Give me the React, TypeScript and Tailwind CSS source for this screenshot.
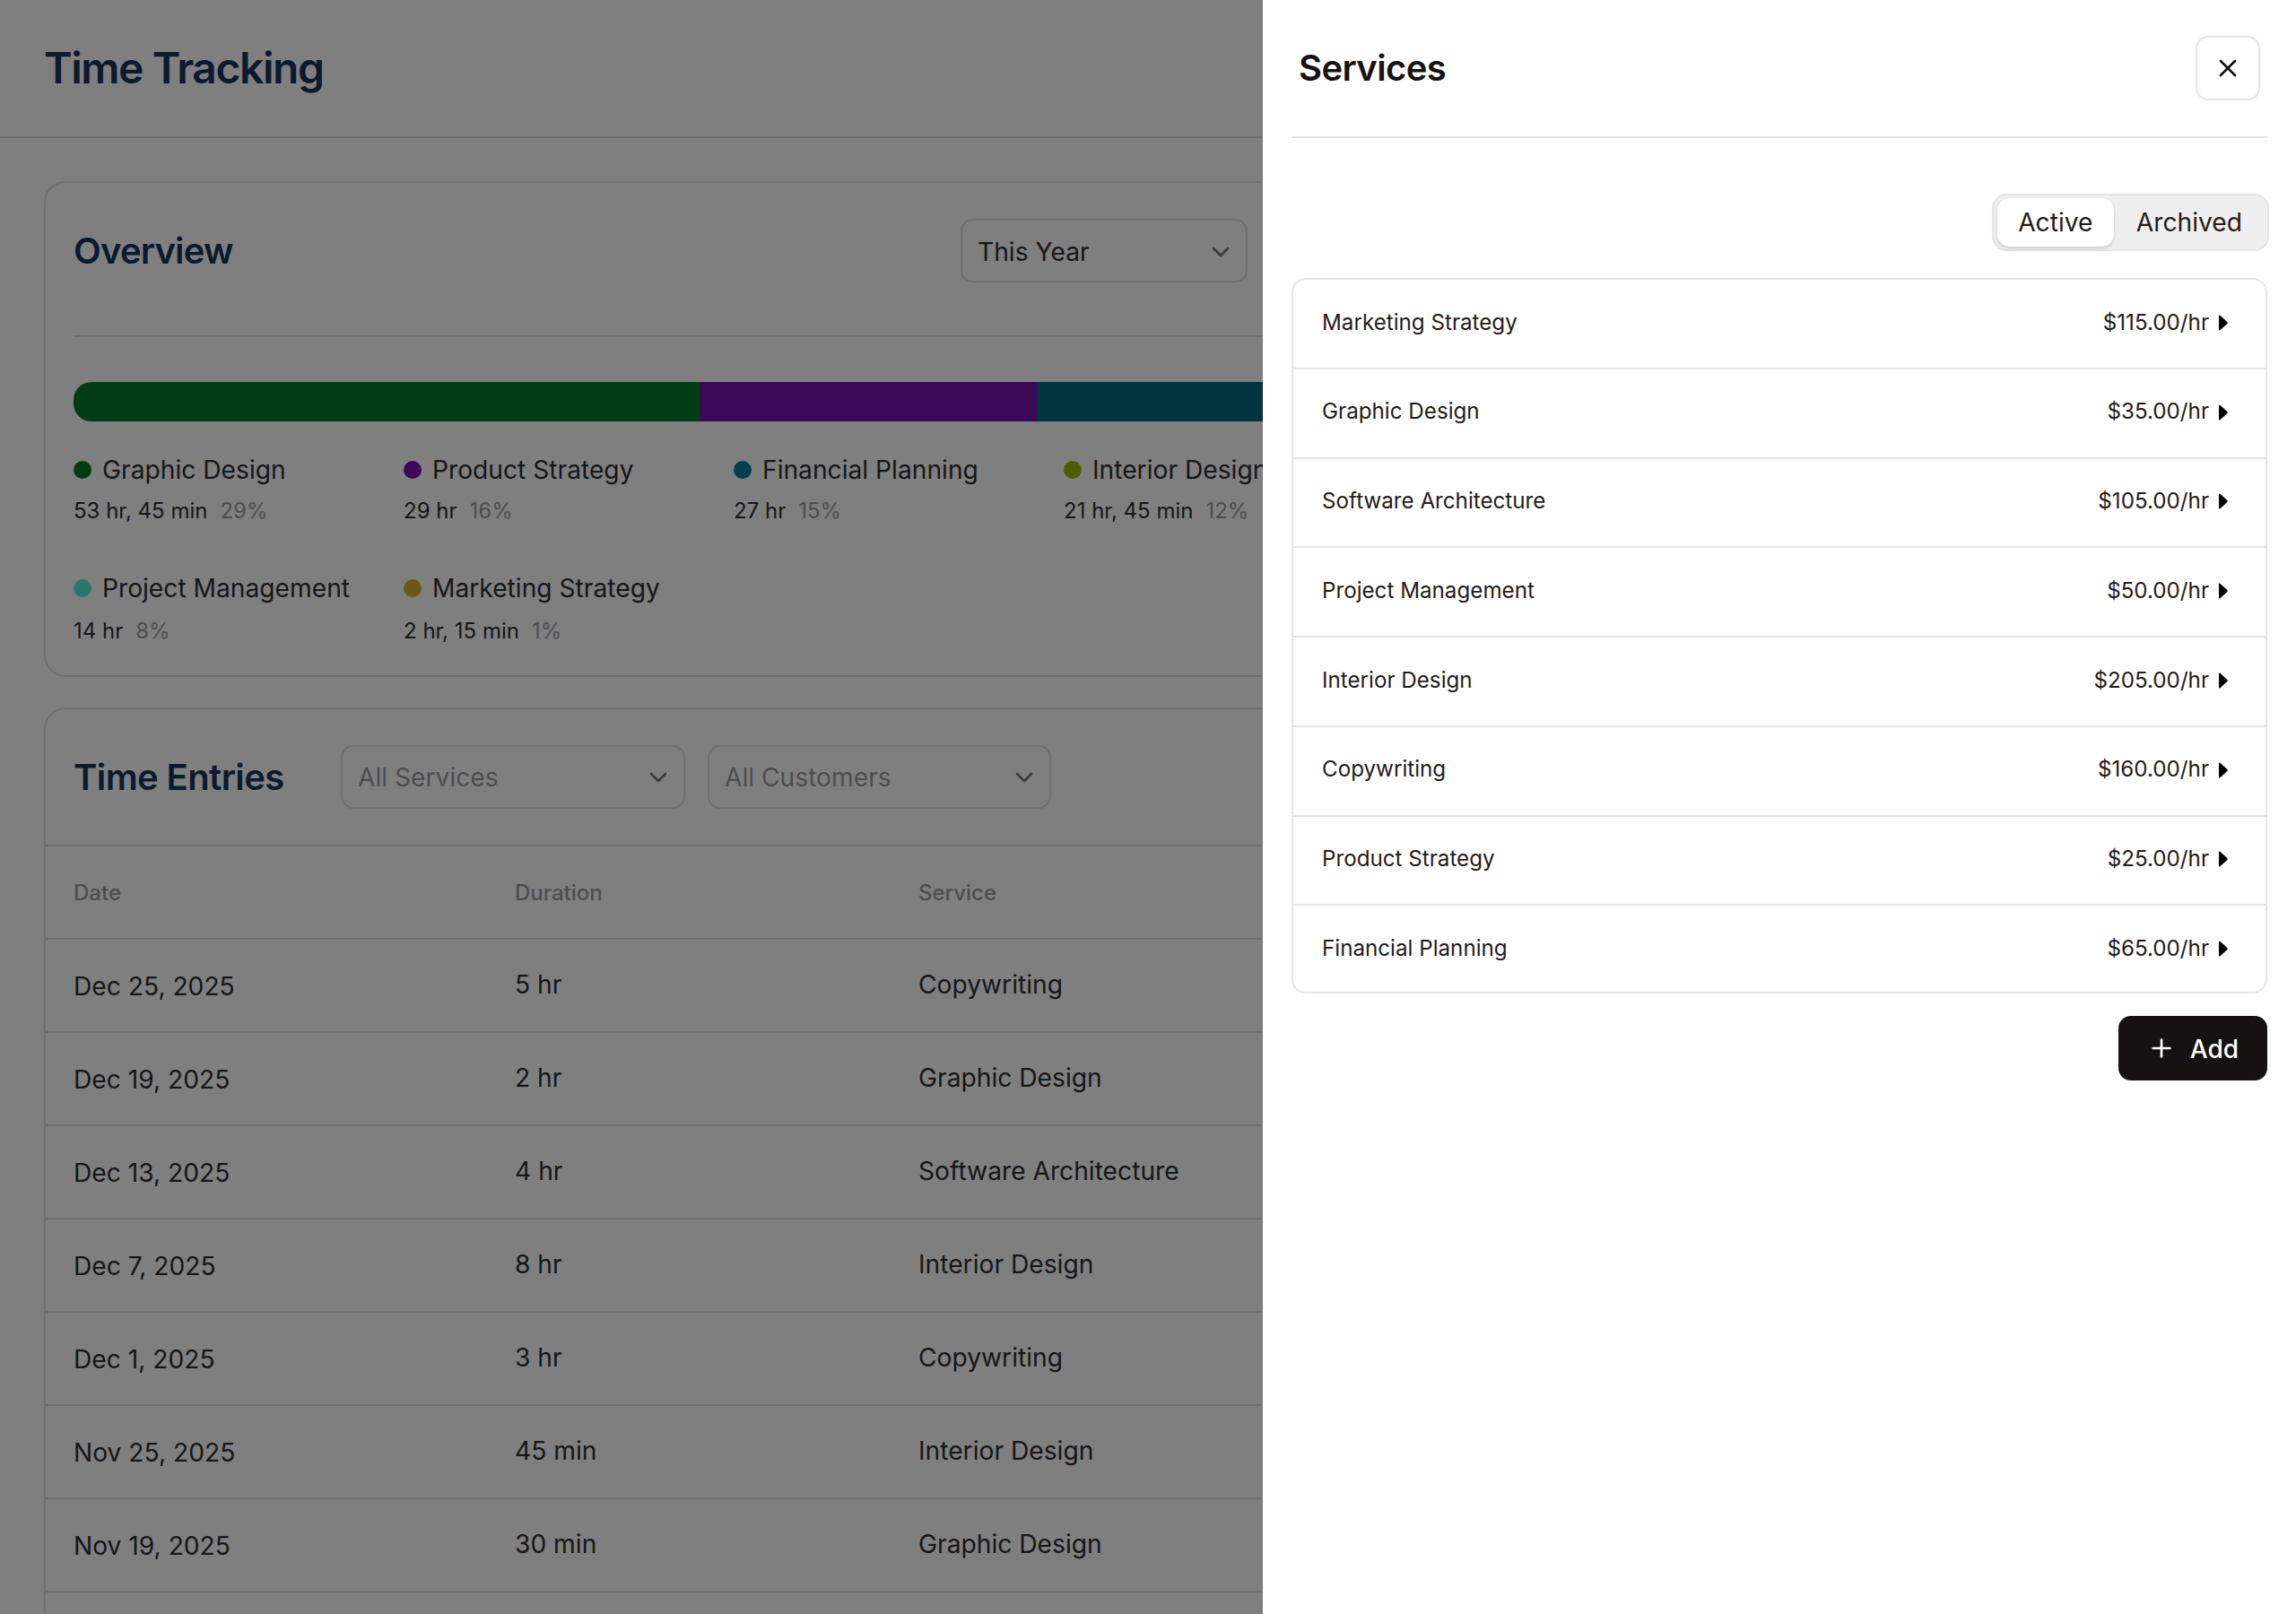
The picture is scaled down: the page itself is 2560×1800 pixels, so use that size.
import React from 'react';
import { ChevronDown, Plus, X } from 'lucide-react';

const legendItems = [
  { name: 'Graphic Design', time: '53 hr, 45 min', pct: '29%', dot: 'bg-[#007a28]' },
  { name: 'Product Strategy', time: '29 hr', pct: '16%', dot: 'bg-[#7414b0]' },
  { name: 'Financial Planning', time: '27 hr', pct: '15%', dot: 'bg-[#008099]' },
  { name: 'Interior Design', time: '21 hr, 45 min', pct: '12%', dot: 'bg-[#9abc00]' },
  { name: 'Project Management', time: '14 hr', pct: '8%', dot: 'bg-[#50f0d4]' },
  { name: 'Marketing Strategy', time: '2 hr, 15 min', pct: '1%', dot: 'bg-[#d6b02c]' },
];

const entries = [
  { date: 'Dec 25, 2025', duration: '5 hr', service: 'Copywriting' },
  { date: 'Dec 19, 2025', duration: '2 hr', service: 'Graphic Design' },
  { date: 'Dec 13, 2025', duration: '4 hr', service: 'Software Architecture' },
  { date: 'Dec 7, 2025', duration: '8 hr', service: 'Interior Design' },
  { date: 'Dec 1, 2025', duration: '3 hr', service: 'Copywriting' },
  { date: 'Nov 25, 2025', duration: '45 min', service: 'Interior Design' },
  { date: 'Nov 19, 2025', duration: '30 min', service: 'Graphic Design' },
];

const services = [
  { name: 'Marketing Strategy', rate: '$115.00/hr' },
  { name: 'Graphic Design', rate: '$35.00/hr' },
  { name: 'Software Architecture', rate: '$105.00/hr' },
  { name: 'Project Management', rate: '$50.00/hr' },
  { name: 'Interior Design', rate: '$205.00/hr' },
  { name: 'Copywriting', rate: '$160.00/hr' },
  { name: 'Product Strategy', rate: '$25.00/hr' },
  { name: 'Financial Planning', rate: '$65.00/hr' },
];

const Select: React.FC<{ label: string; className: string; muted?: boolean }> = ({ label, className, muted }) => (
  <div className={`flex h-[71px] items-center justify-between rounded-[14px] border-2 border-[#dfdfdf] pl-[17px] pr-[12px] text-[28.2px] ${muted ? 'text-[#9a9aa0]' : 'pt-[2px] text-[#2e2e32]'} ${className}`}>
    <span className="pt-[2px]">{label}</span>
    <ChevronDown className="h-[32px] w-[32px] text-[#77777c]" strokeWidth={2} />
  </div>
);

const Caret = () => (
  <svg viewBox="0 0 10 18" className="h-[18px] w-[10px]" fill="#000">
    <path d="M1 0.6 L9.4 8 Q10 9 9.4 10 L1 17.4 Q0 18 0 16.6 V1.4 Q0 0 1 0.6 Z" />
  </svg>
);

export default function App() {
  return (
    <div className="relative h-[1800px] w-[2560px] overflow-hidden bg-white font-['Inter',sans-serif]">
      <header className="flex h-[154px] items-center border-b-2 border-[#dfdfdf] px-[49px]">
        <h1 className="text-[48px] font-semibold tracking-[-1.45px] text-[#18345c]">Time Tracking</h1>
      </header>

      <main className="w-[1600px] px-[49px] pt-[48px]">
        {/* Overview */}
        <section className="h-[553px] rounded-[24px] border-2 border-[#dfdfdf] px-[31px] pt-[40px]">
          <div className="flex items-center justify-between border-b-2 border-[#dfdfdf] pb-[59px]">
            <h2 className="text-[40px] font-semibold tracking-[-0.8px] text-[#18345c]">Overview</h2>
            <Select label="This Year" className="mr-[127px] w-[320px]" />
          </div>
          <div className="mt-[50px] flex h-[44px] overflow-hidden rounded-l-[20px]">
            <div className="w-[698px] bg-[#007a28]" />
            <div className="w-[376px] bg-[#7414b0]" />
            <div className="flex-1 bg-[#006880]" />
          </div>
          <div className="mt-[34px] grid grid-cols-[repeat(4,368px)] gap-y-[48px]">
            {legendItems.map((item, i) => (
              <div key={item.name} className="whitespace-nowrap">
                <div className="flex h-[40px] items-center gap-[12px] text-[28.2px] text-[#2e2e32]">
                  <span className={`h-[20px] w-[20px] rounded-full ${item.dot}`} />
                  {item.name}
                </div>
                <div className={`flex h-[36px] items-center gap-[14px] text-[24px] ${i < 4 ? 'mt-[8px]' : 'mt-[10px]'}`}>
                  <span className="text-[#2e2e32]">{item.time}</span>
                  <span className="text-[#9a9aa0]">{item.pct}</span>
                </div>
              </div>
            ))}
          </div>
        </section>

        {/* Time entries */}
        <section className="mt-[34px] h-[1200px] rounded-[24px] border-2 border-[#dfdfdf]">
          <div className="flex h-[153px] items-center border-b-2 border-[#dfdfdf] pl-[31px]">
            <h2 className="w-[298px] text-[40px] font-semibold tracking-[-0.6px] text-[#18345c]">Time Entries</h2>
            <div className="flex gap-[25px]">
              <Select label="All Services" className="w-[384px]" muted />
              <Select label="All Customers" className="w-[383px]" muted />
            </div>
          </div>
          <div className="grid h-[104px] grid-cols-[492px_450px_1fr] items-center border-b-2 border-[#dfdfdf] pl-[31px] pt-[2px] text-[24px] font-medium text-[#9a9aa0]">
            <div>Date</div>
            <div>Duration</div>
            <div>Service</div>
          </div>
          {entries.map((entry) => (
            <div key={entry.date} className="grid h-[104px] grid-cols-[492px_450px_1fr] items-center border-b-2 border-[#dfdfdf] pb-[2px] pl-[31px] text-[28.2px] text-[#2e2e32]">
              <div className="pt-[5px]">{entry.date}</div>
              <div>{entry.duration}</div>
              <div>{entry.service}</div>
            </div>
          ))}
        </section>
      </main>

      {/* dimmed backdrop */}
      <div className="absolute inset-0 bg-black/50" />

      {/* Services sheet */}
      <aside className="absolute right-0 top-0 h-full w-[1152px] bg-white px-[32px] text-[#241c1c]">
        <div className="flex h-[154px] items-center justify-between border-b-2 border-[#e5e5e5] pl-[8px] pr-[8px]">
          <h2 className="text-[40px] font-semibold tracking-[-0.6px] text-[#171212]">Services</h2>
          <button className="flex h-[72px] w-[72px] items-center justify-center rounded-[14px] border-2 border-[#e5e5e5]">
            <X className="h-[32px] w-[32px] text-[#171212]" strokeWidth={2} />
          </button>
        </div>

        <div className="mr-[-2px] mt-[62px] flex justify-end">
          <div className="flex h-[64px] items-center rounded-[16px] border-2 border-[#e5e5e5] bg-[#efefef] pl-[4px] pr-[28px]">
            <div className="flex h-[54px] w-[130px] items-center justify-center rounded-[14px] bg-white text-[28.2px] shadow-[0_2px_4px_rgba(0,0,0,0.15)]">Active</div>
            <div className="ml-[25px] text-[28.2px]">Archived</div>
          </div>
        </div>

        <div className="mt-[30px] rounded-[16px] border-2 border-[#e5e5e5]">
          {services.map((service, i) => (
            <div
              key={service.name}
              className={`flex items-center justify-between pl-[32px] pr-[42px] text-[24.2px] ${i < services.length - 1 ? 'h-[99.75px] border-b-2 border-[#e5e5e5] pb-[2px]' : 'h-[95.25px]'}`}
            >
              <span>{service.name}</span>
              <span className="flex items-center gap-[11px]">
                {service.rate}
                <Caret />
              </span>
            </div>
          ))}
        </div>

        <div className="mt-[25px] flex justify-end">
          <button className="flex h-[72px] items-center gap-[16px] rounded-[14px] bg-[#171212] px-[32px] text-[28px] font-medium text-white">
            <Plus className="h-[32px] w-[32px]" strokeWidth={2} />
            <span className="pt-[2px]">Add</span>
          </button>
        </div>
      </aside>
    </div>
  );
}
